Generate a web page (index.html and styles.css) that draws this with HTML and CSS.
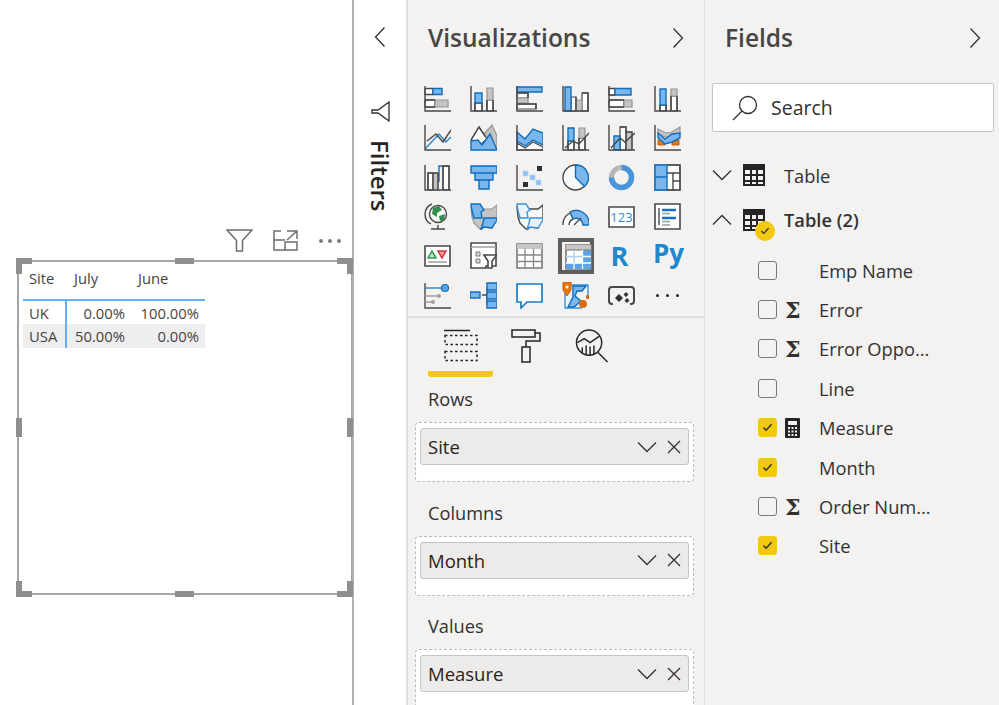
FILE: index.html
```html
<!DOCTYPE html>
<html lang="en">
<head>
    <meta charset="UTF-8">
    <title>Power BI report</title>
    <link rel="stylesheet" href="styles.css">
</head>
<body>
<svg class="defs">
    <symbol id="chev-right" viewBox="0 0 12 22"><path class="thin" d="M1.500 1.500 10.500 11 1.500 20.500"/></symbol>
    <symbol id="chev-left" viewBox="0 0 12 22"><path class="thin" d="M10.500 1.500 1.500 11 10.500 20.500"/></symbol>
    <symbol id="chev-down" viewBox="0 0 20 12"><path class="thin" d="M1 1.500 10 10.500 19 1.500"/></symbol>
    <symbol id="chev-up" viewBox="0 0 20 12"><path class="thin" d="M1 10.500 10 1.500 19 10.500"/></symbol>
    <symbol id="cross" viewBox="0 0 14 14"><path class="thin" d="M1 1 13 13M13 1 1 13"/></symbol>
    <symbol id="tick" viewBox="0 0 12 10"><path class="tick" d="M1.500 5 4.500 8 10.500 1.500"/></symbol>
    <symbol id="grid-icon" viewBox="0 0 22 22"><path class="solid" d="M0 0H22V22H0ZM2 6V10H7V6ZM9 6V10H13V6ZM15 6V10H20V6ZM2 12V16H7V12ZM9 12V16H13V12ZM15 12V16H20V12ZM2 18V20H7V18ZM9 18V20H13V18ZM15 18V20H20V18Z" fill-rule="evenodd"/></symbol>
</svg>

<div class="app">
    <!-- report canvas -->
    <div class="canvas">
        <div class="visual-tools">
            <svg class="tool-filter" viewBox="0 0 27 23"><path class="stroke" d="M1 1H26L16.500 11.500V22H10.500V11.500Z"/></svg>
            <svg class="tool-focus" viewBox="0 0 25 21"><path class="stroke" d="M8 1H1V20H24V12H12V20M1 10H12M14 1H24V9M24 1 14 10"/></svg>
            <div class="tool-dots"><i></i><i></i><i></i></div>
        </div>
        <div class="visual">
            <i class="handle corner tl"></i><i class="handle corner tr"></i>
            <i class="handle corner bl"></i><i class="handle corner br"></i>
            <i class="handle mid-h top"></i><i class="handle mid-h bottom"></i>
            <i class="handle mid-v left"></i><i class="handle mid-v right"></i>
            <table class="matrix">
                <thead>
                    <tr><th class="c1">Site</th><th class="c2">July</th><th class="c3">June</th></tr>
                </thead>
                <tbody>
                    <tr><td class="c1">UK</td><td class="c2">0.00%</td><td class="c3">100.00%</td></tr>
                    <tr class="alt"><td class="c1">USA</td><td class="c2">50.00%</td><td class="c3">0.00%</td></tr>
                </tbody>
            </table>
        </div>
    </div>

    <!-- collapsed filters -->
    <div class="filters">
        <svg class="chev-lg"><use href="#chev-left"/></svg>
        <svg class="filter-icon" viewBox="0 0 19 21"><path class="stroke-dk" d="M18 1V20L7 12H1V9H7Z"/></svg>
        <div class="filters-label">Filters</div>
    </div>

    <!-- visualizations -->
    <div class="viz">
        <div class="pane-head">
            <h2>Visualizations</h2>
            <svg class="chev-lg"><use href="#chev-right"/></svg>
        </div>
        <div class="viz-grid">
            <svg class="vi" viewBox="0 0 27 27"><path class="wh" d="M1 3.500H9V9.500H1ZM1 15H11V22H1Z"/><path class="bl" d="M9 3.500H18V9.500H9Z"/><path class="gy" d="M11 15H24V22H11Z"/><path class="ax" d="M1 1V26H27M1 3.500H9M1 9.500H9M1 15H11M1 22H11"/></svg>
            <svg class="vi" viewBox="0 0 27 27"><path class="wh" d="M5 18H12V26H5ZM17 15H23V26H17Z"/><path class="bl" d="M5 8H12V18H5Z"/><path class="gy" d="M17 3H23V15H17Z"/><path class="ax" d="M1 1V26H27M5 18V26M12 18V26M17 15V26M23 15V26"/></svg>
            <svg class="vi" viewBox="0 0 27 27"><path class="wh" d="M1 8H12V13H1ZM1 19H20V24H1Z"/><path class="gy" d="M1 13H12V18H1Z"/><path class="bl" d="M1 2H26V7H1Z"/><path class="ax" d="M1 1V26H27M1 8H12V13M1 19H20V24"/></svg>
            <svg class="vi" viewBox="0 0 27 27"><path class="wh" d="M9 12H14V26H9ZM20 8H26V26H20Z"/><path class="gy" d="M14 15H20V26H14Z"/><path class="bl" d="M3 2H9V26H3Z"/><path class="ax" d="M1 1V26H27M14 12V26M20 8H26V26"/></svg>
            <svg class="vi" viewBox="0 0 27 27"><path class="wh" d="M1 3.500H7V10H1ZM1 15H16V22H1Z"/><path class="bl" d="M7 3.500H23V10H7Z"/><path class="gy" d="M16 15H24V22H16Z"/><path class="ax" d="M1 1V26H27M1 3.500H7M1 10H7M1 15H16M1 22H16"/></svg>
            <svg class="vi" viewBox="0 0 27 27"><path class="wh" d="M6 20H12V26H6ZM17 11H23V26H17Z"/><path class="bl" d="M6 4H12V20H6Z"/><path class="gy" d="M17 4H23V11H17Z"/><path class="ax" d="M1 1V26H27M6 20V26M12 20V26M17 11V26M23 11V26"/></svg>

            <svg class="vi" viewBox="0 0 27 27"><path class="ln-b" d="M1 25 15 10 22 18 27 13"/><path class="ax" d="M1 1V26H27M3 17 12 10 19 18 27 6"/></svg>
            <svg class="vi" viewBox="0 0 27 27"><path class="gy" d="M14 10 22 1 27 12V26H20Z"/><path class="wh" d="M1 16 9 3 17 15 11 20 8 17Z"/><path class="bl" d="M1 26V17L8 16 12 21 20 10 27 26Z"/><path class="ax" d="M1 16 9 3 15 12"/></svg>
            <svg class="vi" viewBox="0 0 27 27"><path class="wh" d="M1 19 9 24 17 18 27 23V26H1Z"/><path class="bl" d="M1 8 9 15 17 5 27 9V21L17 16 9 22 1 17Z"/><path class="ax" d="M1 1V26H27"/></svg>
            <svg class="vi" viewBox="0 0 27 27"><path class="wh" d="M6 17H12V26H6ZM17 14H23V26H17Z"/><path class="bl" d="M6 4H12V17H6Z"/><path class="gy" d="M17 4H23V14H17Z"/><path class="ax" d="M1 1V26H27M6 17V26M12 17V26M17 14V26M23 14V26M3 24 11 17 17 20 27 9"/></svg>
            <svg class="vi" viewBox="0 0 27 27"><path class="wh" d="M12 3H18V26H12Z"/><path class="bl" d="M6 12H12V26H6Z"/><path class="gy" d="M18 8H24V26H18Z"/><path class="ax" d="M1 1V26H27M12 3H18V26M18 8H24V26M3 24 12 14 17 18 27 9"/></svg>
            <svg class="vi" viewBox="0 0 27 27"><path class="or" d="M4 16H11V21H4ZM18 16H25V21H18Z"/><path class="gy" d="M4 5 12 9 18 8 26 3V10L18 14 12 13 4 10Z"/><path class="bl" d="M4 9 11 15 18 10 26 9V14L18 18 11 20 4 14Z"/><path class="ax" d="M1 1V26H27"/></svg>

            <svg class="vi" viewBox="0 0 27 27"><path class="wh" d="M4 9H9V26H4ZM19 2H25V26H19Z"/><path class="gy" d="M9 9H14V26H9Z"/><path class="ax-b" d="M14 17H15V2H19"/><path class="ax" d="M1 1V26H27M4 26V9H14V26M9 9V26M19 26V2H25V26"/></svg>
            <svg class="vi" viewBox="0 0 27 27"><path class="bl" d="M1 2H27V9H23V16H19V25H9V16H5V9H1Z"/><path class="ax-b" d="M5 9H23M5 16H19"/></svg>
            <svg class="vi" viewBox="0 0 27 27"><path class="dk" d="M21 2H26V7H21ZM7 18H12V23H7Z"/><path class="bl-s" d="M7 7H12V12H7ZM14 11H19V16H14ZM20 16H25V21H20Z"/><path class="ax" d="M1 1V26H27"/></svg>
            <svg class="vi" viewBox="0 0 27 27"><circle class="wh-d" cx="13.500" cy="13.500" r="12.500"/><path class="bl" d="M13.500 1A12.500 12.500 0 0 1 22.500 22.500L13.500 13.500Z"/></svg>
            <svg class="vi" viewBox="0 0 27 27"><circle class="gy-ring" cx="13.500" cy="13.500" r="10"/><path class="bl-ring" d="M13.500 3.500A10 10 0 1 1 3.500 13.500"/></svg>
            <svg class="vi" viewBox="0 0 27 27"><path class="wh" d="M1 1H26V26H1Z"/><path class="bl" d="M1 1H13V13H1ZM1 13H13V26H1Z"/><path class="ax" d="M13 1H26V26H13M13 9H26M19 9V26M19 17H26"/></svg>

            <svg class="vi" viewBox="0 0 27 27"><circle class="wh-d" cx="14" cy="11" r="8.500"/><path class="gn" d="M9 5 15 3 18 7 13 10 13 14 8 11ZM15 13 21 11 20 17 16 18Z"/><path class="ax" d="M8 1A11 11 0 0 0 7 21M14 22V26M7 26H21"/></svg>
            <svg class="vi" viewBox="0 0 27 27"><path class="gy" d="M1 4 10 6 22 6 27 2V14L22 25 14 24 11 27 4 20 2 14Z"/><path class="bl" d="M1 1H10L14 7 11 9 12 15 4 15 2 8ZM14 15H27V17L22 25 14 24 11 26 13 20Z"/></svg>
            <svg class="vi" viewBox="0 0 27 27"><path class="wh-d" d="M1 4 10 6 22 6 27 2V14L22 25 14 24 11 27 4 20 2 14Z"/><path class="bl-lt" d="M1 1H10L14 7 11 9 12 15 4 15 2 8ZM14 15H27V17L22 25 14 24 11 26 13 20Z"/></svg>
            <svg class="vi" viewBox="0 0 27 27"><path class="wh-d2" d="M1 22A12.500 12.500 0 0 1 26 22"/><path class="bl" d="M8 9A13 13 0 0 1 27 22H21A7 7 0 0 0 11 16Z"/><path class="ax" d="M1 22A13 13 0 0 1 8 10M7 22A7 7 0 0 1 11 16M12 22 19 15"/></svg>
            <svg class="vi" viewBox="0 0 27 27"><path class="wh-f" d="M1 4H26V24H1Z"/><text class="num" x="13.500" y="19">123</text></svg>
            <svg class="vi" viewBox="0 0 27 27"><path class="wh-f" d="M1 1H26V26H1Z"/><path class="ln-bw" d="M8 7H22M8 15H22"/><path class="ln-g" d="M8 10.500H16M8 18.500H16M8 22H16"/><path class="ax" d="M5 5V22"/></svg>

            <svg class="vi" viewBox="0 0 27 27"><path class="wh-f" d="M1 4H26V24H1Z"/><path class="gn-s" d="M4 16 8 9 12 16Z"/><path class="rd" d="M14 9H22L18 16Z"/><path class="ln-g" d="M4 20H23"/></svg>
            <svg class="vi" viewBox="0 0 27 27"><path class="wh-f" d="M1 1H26V24H16V26H1Z"/><path class="wh-f" d="M14 13H27L22 19V26H18V19Z"/><path class="ln-g" d="M1 5H26"/><path class="gy-s" d="M6 10H10V14H6ZM6 17H10V21H6Z"/></svg>
            <svg class="vi" viewBox="0 0 27 27"><path class="wh-g" d="M1 2H26V26H1Z"/><path class="gyb" d="M1 2H26V7H1Z"/><path class="ln-gd" d="M1 13H26M1 19.500H26M9 7V26M17.500 7V26"/></svg>
            <div class="vi-selected">
                <svg class="vi" viewBox="0 0 27 27"><path class="wh-g" d="M1 2H26V26H1Z"/><path class="gyb" d="M1 2H26V7H1Z"/><path class="bl-f" d="M1 20H17.500V26H1ZM17.500 7H26V26H17.500Z"/><path class="ln-gd" d="M1 7H26"/><path class="ln-w" d="M17.500 13.500H26M1 20H26M9 20V26M17.500 7V26"/><path class="ln-lt" d="M1 13.500H17.500M9 7V20"/></svg>
            </div>
            <div class="vi-letter">R</div>
            <div class="vi-letter py">Py</div>

            <svg class="vi" viewBox="0 0 27 27"><path class="ax" d="M1 1V26H27"/><path class="ln-g" d="M1 14H14M1 20H9"/><circle class="pin-g" cx="15" cy="14" r="2"/><circle class="pin-g" cx="9" cy="20" r="2"/><path class="ln-bt" d="M1 6H18"/><circle class="pin-b" cx="21" cy="6" r="3.500"/></svg>
            <svg class="vi" viewBox="0 0 27 27"><path class="ax" d="M12 13H17M17 5V23M17 5H20M17 23H20"/><path class="bl" d="M0 10H10V16H0ZM17 1H27V8H17ZM17 10H27V17H17ZM17 19H27V26H17Z"/></svg>
            <svg class="vi" viewBox="0 0 27 27"><path class="wh-bb" d="M1 2H26V20H11L5 26V20H1Z"/></svg>
            <svg class="vi" viewBox="0 0 27 27"><path class="bl-lt" d="M3 3H26V17M20 26H3V3"/><path class="bl" d="M11 4H24L20 9 15 9 13 14 19 19 12 25H6L11 15Z"/><path class="or" d="M1 0H9V8L5 14 1 8Z"/><circle class="wh-dot" cx="5" cy="5" r="1.500"/><circle class="or-f" cx="21" cy="22" r="4"/><circle class="or-f" cx="26" cy="15" r="2.200"/></svg>
            <svg class="vi" viewBox="0 0 27 27"><path class="ax-n" d="M5 22H4Q1 22 1 19V8Q1 5 4 5H23Q26 5 26 8V19Q26 22 23 22H22"/><path class="dk" d="M11 12 15 16 11 20 7 16ZM18 10 20.500 12.500 18 15 15.500 12.500ZM19 16 21.500 18.500 19 21 16.500 18.500Z"/></svg>
            <div class="vi-more"><i></i><i></i><i></i></div>
        </div>

        <div class="viz-tabs">
            <div class="viz-tab active">
                <svg class="tab-icon" viewBox="0 0 34 33"><path class="ln-k" d="M0 1H26"/><path class="dash" d="M1 6H33V15H1ZM1 22H33V31H1Z"/></svg>
            </div>
            <div class="viz-tab">
                <svg class="tab-icon" viewBox="0 0 30 34"><path class="ln-k" d="M1 1H24V8H1ZM24 4H29V12H15V18M11 18H19V33H11Z"/></svg>
            </div>
            <div class="viz-tab">
                <svg class="tab-icon" viewBox="0 0 34 35"><circle class="ln-k" cx="14" cy="14" r="13"/><path class="ln-k" d="M2 14 9 10 15 14 25 7M7 19V25M11 17V27M15 18V27M19 17V26M23 24 33 34"/></svg>
            </div>
        </div>

        <div class="well-group">
            <div class="well-label">Rows</div>
            <div class="well">
                <div class="pill"><span>Site</span><svg class="pill-chev"><use href="#chev-down"/></svg><svg class="pill-x"><use href="#cross"/></svg></div>
            </div>
        </div>
        <div class="well-group">
            <div class="well-label">Columns</div>
            <div class="well">
                <div class="pill"><span>Month</span><svg class="pill-chev"><use href="#chev-down"/></svg><svg class="pill-x"><use href="#cross"/></svg></div>
            </div>
        </div>
        <div class="well-group">
            <div class="well-label">Values</div>
            <div class="well">
                <div class="pill"><span>Measure</span><svg class="pill-chev"><use href="#chev-down"/></svg><svg class="pill-x"><use href="#cross"/></svg></div>
            </div>
        </div>
    </div>

    <!-- fields -->
    <div class="fields">
        <div class="pane-head">
            <h2>Fields</h2>
            <svg class="chev-lg"><use href="#chev-right"/></svg>
        </div>
        <div class="search">
            <svg class="search-icon" viewBox="0 0 26 26"><circle class="thin" cx="16" cy="10" r="8.500"/><path class="thin" d="M10 16 1 25"/></svg>
            <span>Search</span>
        </div>
        <div class="tree-row">
            <svg class="tree-chev"><use href="#chev-down"/></svg>
            <svg class="tree-grid"><use href="#grid-icon"/></svg>
            <span class="tree-name">Table</span>
        </div>
        <div class="tree-row">
            <svg class="tree-chev"><use href="#chev-up"/></svg>
            <span class="tree-icon">
                <svg class="tree-grid"><use href="#grid-icon"/></svg>
                <span class="tree-badge"><svg class="badge-tick"><use href="#tick"/></svg></span>
            </span>
            <span class="tree-name strong">Table (2)</span>
        </div>
        <div class="field-list">
            <div class="field"><span class="check"></span><span class="field-type"></span><span>Emp Name</span></div>
            <div class="field"><span class="check"></span><span class="field-type sigma">Σ</span><span>Error</span></div>
            <div class="field"><span class="check"></span><span class="field-type sigma">Σ</span><span>Error Oppo...</span></div>
            <div class="field"><span class="check"></span><span class="field-type"></span><span>Line</span></div>
            <div class="field"><span class="check on"><svg class="check-tick"><use href="#tick"/></svg></span><span class="field-type"><svg class="calc" viewBox="0 0 15 20"><path class="solid" fill-rule="evenodd" d="M1 0H14Q15 0 15 1V19Q15 20 14 20H1Q0 20 0 19V1Q0 0 1 0ZM3 3V7H12V3ZM3 9V11H5V9ZM6.500 9V11H8.500V9ZM10 9V11H12V9ZM3 12.500V14.500H5V12.500ZM6.500 12.500V14.500H8.500V12.500ZM10 12.500V14.500H12V12.500ZM3 16V18H5V16ZM6.500 16V18H8.500V16ZM10 16V18H12V16Z"/></svg></span><span>Measure</span></div>
            <div class="field"><span class="check on"><svg class="check-tick"><use href="#tick"/></svg></span><span class="field-type"></span><span>Month</span></div>
            <div class="field"><span class="check"></span><span class="field-type sigma">Σ</span><span>Order Num...</span></div>
            <div class="field"><span class="check on"><svg class="check-tick"><use href="#tick"/></svg></span><span class="field-type"></span><span>Site</span></div>
        </div>
    </div>
</div>
</body>
</html>
```

FILE: styles.css
```css
* {
    margin: 0;
    padding: 0;
    box-sizing: border-box;
}

html, body {
    height: 100%;
    overflow: hidden;
}

body {
    font-family: "Open Sans", "Noto Sans", sans-serif;
    color: #323130;
    background: #fff;
}

.defs {
    display: none;
}

.app {
    display: flex;
    height: 705px;
}

/* canvas */
.canvas {
    position: relative;
    width: 354px;
    border-right: 2px solid #b3b0ad;
    flex: none;
}

.visual-tools {
    position: absolute;
    top: 229px;
    left: 226px;
    display: flex;
    align-items: center;
}

.tool-filter {
    width: 27px;
    height: 23px;
}

.tool-focus {
    width: 25px;
    height: 21px;
    margin-left: 20px;
}

.tool-dots {
    display: flex;
    gap: 5px;
    margin-left: 21px;
}

.tool-dots i {
    width: 4px;
    height: 4px;
    border-radius: 50%;
    background: #7a7a7a;
}

.visual {
    position: absolute;
    left: 17px;
    top: 260px;
    width: 335px;
    height: 335px;
    border: 2px solid #a6a6a6;
    border-right-width: 1px;
    padding: 1px 0 0 4px;
}

.handle {
    position: absolute;
    background: #8f8f8f;
}

.corner {
    width: 16px;
    height: 16px;
    background: none;
    border: 0 solid #8f8f8f;
}

.corner.tl { left: -3px; top: -4px; border-width: 6px 0 0 6px; }
.corner.tr { right: -2px; top: -4px; border-width: 6px 6px 0 0; }
.corner.bl { left: -3px; bottom: -4px; border-width: 0 0 6px 6px; }
.corner.br { right: -2px; bottom: -4px; border-width: 0 6px 6px 0; }

.mid-h {
    width: 19px;
    height: 6px;
    left: 156px;
}

.mid-h.top { top: -4px; }
.mid-h.bottom { bottom: -4px; }

.mid-v {
    width: 6px;
    height: 19px;
    top: 156px;
}

.mid-v.left { left: -3px; }
.mid-v.right { right: -2px; }

.matrix {
    border-collapse: collapse;
    table-layout: fixed;
    width: 182px;
    font-size: 14.800px;
    color: #444;
}

.matrix th {
    height: 37px;
    font-weight: 400;
    text-align: left;
    padding: 0 0 6px 6px;
    border-bottom: 2px solid #62b0f8;
}

.matrix th.c2 { padding-left: 8px; }
.matrix th.c3 { padding-left: 7px; }

.matrix td {
    height: 24px;
    padding: 0 6px;
    text-align: right;
}

.matrix .c1 { width: 43px; text-align: left; }
.matrix .c2 { width: 65px; }
.matrix .c3 { width: 74px; }
.matrix td.c1 { border-right: 2px solid #62b0f8; }
.matrix .alt { background: #eee; }

/* filters */
.filters {
    width: 54px;
    flex: none;
    border-right: 2px solid #e1dfdd;
    display: flex;
    flex-direction: column;
    align-items: center;
    padding-top: 26px;
}

.chev-lg {
    width: 12px;
    height: 22px;
    flex: none;
}

.filter-icon {
    width: 19px;
    height: 21px;
    margin-top: 53px;
}

.filters-label {
    writing-mode: vertical-rl;
    font-size: 24px;
    font-weight: 600;
    color: #252423;
    margin-top: 18px;
}

/* visualizations */
.viz {
    width: 297px;
    flex: none;
    background: #f3f2f1;
    border-right: 1px solid #e1dfdd;
    overflow: hidden;
}

.pane-head {
    display: flex;
    justify-content: space-between;
    align-items: center;
    padding: 0 20px 0 20px;
    margin-bottom: 10px;
    height: 75px;
}

.pane-head h2 {
    font-size: 24.500px;
    font-weight: 600;
    color: #484644;
}

.viz-grid {
    display: grid;
    grid-template-columns: repeat(6, 46px);
    grid-auto-rows: 39.330px;
    padding-left: 16px;
    height: 233px;
    border-bottom: 2px solid #e1dfdd;
}

.vi {
    width: 27px;
    height: 27px;
}

.vi-selected {
    width: 36px;
    height: 36px;
    margin: -4px 0 0 -4px;
    padding: 3px;
    border: 4px solid #605e5c;
    display: flex;
    align-items: flex-start;
}

.vi-selected .vi {
    margin-top: -2px;
    margin-left: 0;
    flex: none;
}

.vi-letter {
    width: 27px;
    font-size: 27px;
    line-height: 27px;
    font-weight: 700;
    color: #1e88cc;
    text-align: center;
    margin-left: -2px;
}

.vi-letter.py {
    font-size: 26px;
    margin-left: -1px;
    width: 30px;
    margin-top: -2px;
}

.vi-more {
    display: flex;
    gap: 7px;
    width: 27px;
    height: 27px;
    align-items: center;
    justify-content: center;
}

.vi-more i {
    width: 3px;
    height: 3px;
    border-radius: 50%;
    background: #252423;
}

/* svg paint */
.thin { fill: none; stroke: #323130; stroke-width: 1.300; }
.tick { fill: none; stroke: #323130; stroke-width: 1.600; }
.solid { fill: #252423; }
.stroke { fill: none; stroke: #6f6d6b; stroke-width: 1.500; }
.stroke-dk { fill: none; stroke: #323130; stroke-width: 1.300; }
.ax { fill: none; stroke: #4a4846; stroke-width: 1.400; }
.ax-n { fill: none; stroke: #4a4846; stroke-width: 2; }
.ax-b { fill: none; stroke: #106ebe; stroke-width: 1.400; }
.bl { fill: #7ab6ec; stroke: #106ebe; stroke-width: 1.400; }
.bl-f { fill: #5aa5e8; }
.bl-s { fill: #8cc0ee; stroke: #b8d8f4; stroke-width: .800; }
.bl-lt { fill: #eaf3fb; stroke: #3b93d8; stroke-width: 1.400; }
.gy { fill: #c6c4c2; stroke: #979593; stroke-width: 1.200; }
.gy-s { fill: #d8d6d4; stroke: #777; stroke-width: 1; }
.gyb { fill: #c8c6c4; }
.wh { fill: #fff; stroke: #4a4846; stroke-width: 1.200; }
.wh-d { fill: #fafafa; stroke: #4a4846; stroke-width: 1.400; }
.wh-d2 { fill: #fff; stroke: none; }
.wh-f { fill: #fff; stroke: #4a4846; stroke-width: 1.600; }
.wh-g { fill: #fff; stroke: #7a7876; stroke-width: 1.600; }
.wh-bb { fill: #fff; stroke: #1a7cc8; stroke-width: 1.700; }
.wh-dot { fill: #fff; }
.dk { fill: #323130; }
.or { fill: #e8750f; stroke: #c95f0a; stroke-width: 1; }
.or-f { fill: #dc6a0e; }
.gn { fill: #2f8f4e; stroke: none; }
.gn-s { fill: #bfe3c6; stroke: #2f9a52; stroke-width: 1.500; }
.rd { fill: #f2a0a0; stroke: #d13438; stroke-width: 1.500; }
.ln-b { fill: none; stroke: #2b88d8; stroke-width: 1.500; }
.ln-bw { fill: none; stroke: #1a6fc0; stroke-width: 2.400; }
.ln-bt { fill: none; stroke: #1a7cc8; stroke-width: 1.300; }
.ln-g { fill: none; stroke: #a19f9d; stroke-width: 1.500; }
.ln-gd { fill: none; stroke: #8a8886; stroke-width: 1.300; }
.ln-w { fill: none; stroke: #fff; stroke-width: 1.300; }
.ln-lt { fill: none; stroke: #a7cdee; stroke-width: 1.300; }
.ln-k { fill: none; stroke: #252423; stroke-width: 1.500; }
.pin-g { fill: #a19f9d; }
.pin-b { fill: #5aa5e8; stroke: #106ebe; stroke-width: 1.200; }
.gy-ring { fill: none; stroke: #b8b6b4; stroke-width: 5; }
.bl-ring { fill: none; stroke: #4a95da; stroke-width: 5.500; }
.dash { fill: none; stroke: #252423; stroke-width: 1.500; stroke-dasharray: 2.500 2.500; }
.num {
    font-family: "Open Sans", sans-serif;
    font-size: 13px;
    fill: #2b88d8;
    text-anchor: middle;
}

.viz-tabs {
    display: flex;
    padding: 11px 0 0 20px;
    height: 68px;
}

.viz-tab {
    width: 65px;
    height: 48px;
    display: flex;
    justify-content: center;
    margin-right: 18px;
    flex: none;
}

.viz-tab:nth-child(2) {
    width: 30px;
    margin-right: 34px;
}

.viz-tab:nth-child(3) {
    width: 34px;
}

.viz-tab.active {
    border-bottom: 6px solid #f2c811;
    border-radius: 0 0 3px 3px;
}

.tab-icon {
    width: 34px;
    height: 34px;
}

.well-group {
    height: 113.500px;
    padding: 0 10px 0 7px;
}

.well-label {
    font-size: 18.200px;
    line-height: 24px;
    padding-left: 13px;
    padding-top: 1px;
    height: 36px;
}

.well {
    background: #fff;
    border: 1.500px dashed #bdbbb9;
    border-radius: 4px;
    height: 60px;
    padding: 5px 4px;
}

.pill {
    display: flex;
    align-items: center;
    height: 37px;
    padding: 0 7px;
    background: #edebe9;
    border: 1.500px solid #c8c6c4;
    border-radius: 3px;
    font-size: 18.500px;
    color: #252423;
}

.pill span {
    flex: 1;
}

.pill-chev {
    width: 20px;
    height: 12px;
}

.pill-x {
    width: 14px;
    height: 14px;
    margin-left: 10px;
}

/* fields */
.fields {
    flex: 1;
    background: #f3f2f1;
}

.fields .pane-head {
    padding-right: 18px;
    margin-bottom: 8px;
}

.search {
    display: flex;
    align-items: center;
    width: 282px;
    height: 49px;
    margin-left: 7px;
    background: #fff;
    border: 1.500px solid #c8c6c4;
    border-radius: 2px;
    padding-left: 19px;
    font-size: 19.500px;
    margin-bottom: 21px;
}

.search-icon {
    width: 26px;
    height: 26px;
    margin-right: 13px;
}

.tree-row {
    display: flex;
    align-items: center;
    height: 44.500px;
    padding-left: 7px;
    font-size: 18.300px;
}

.tree-chev {
    width: 20px;
    height: 12px;
    flex: none;
}

.tree-grid {
    width: 22px;
    height: 22px;
    margin-left: 11px;
    flex: none;
    display: block;
}

.tree-icon {
    position: relative;
    display: block;
}

.tree-badge {
    position: absolute;
    left: 23px;
    top: 12px;
    width: 20px;
    height: 20px;
    border-radius: 50%;
    background: #f2c811;
    display: flex;
    align-items: center;
    justify-content: center;
}

.badge-tick {
    width: 10px;
    height: 8px;
}

.tree-name {
    margin-left: 19px;
}

.tree-name.strong {
    font-weight: 600;
}

.field-list {
    padding-top: 8.500px;
}

.field {
    display: flex;
    align-items: center;
    height: 39.400px;
    padding-left: 53px;
    font-size: 18.300px;
}

.check {
    width: 19px;
    height: 19px;
    border: 1.500px solid #7a7876;
    border-radius: 3px;
    background: #f3f2f1;
    display: flex;
    align-items: center;
    justify-content: center;
    flex: none;
}

.check.on {
    background: #f2c811;
    border-color: #f2c811;
}

.check-tick {
    width: 11px;
    height: 9px;
}

.field-type {
    width: 42px;
    padding-left: 8px;
    flex: none;
    display: flex;
    align-items: center;
}

.field-type.sigma {
    font-family: "DejaVu Serif", serif;
    font-size: 22px;
    font-weight: 700;
    line-height: 20px;
}

.calc {
    width: 15px;
    height: 20px;
}
```
